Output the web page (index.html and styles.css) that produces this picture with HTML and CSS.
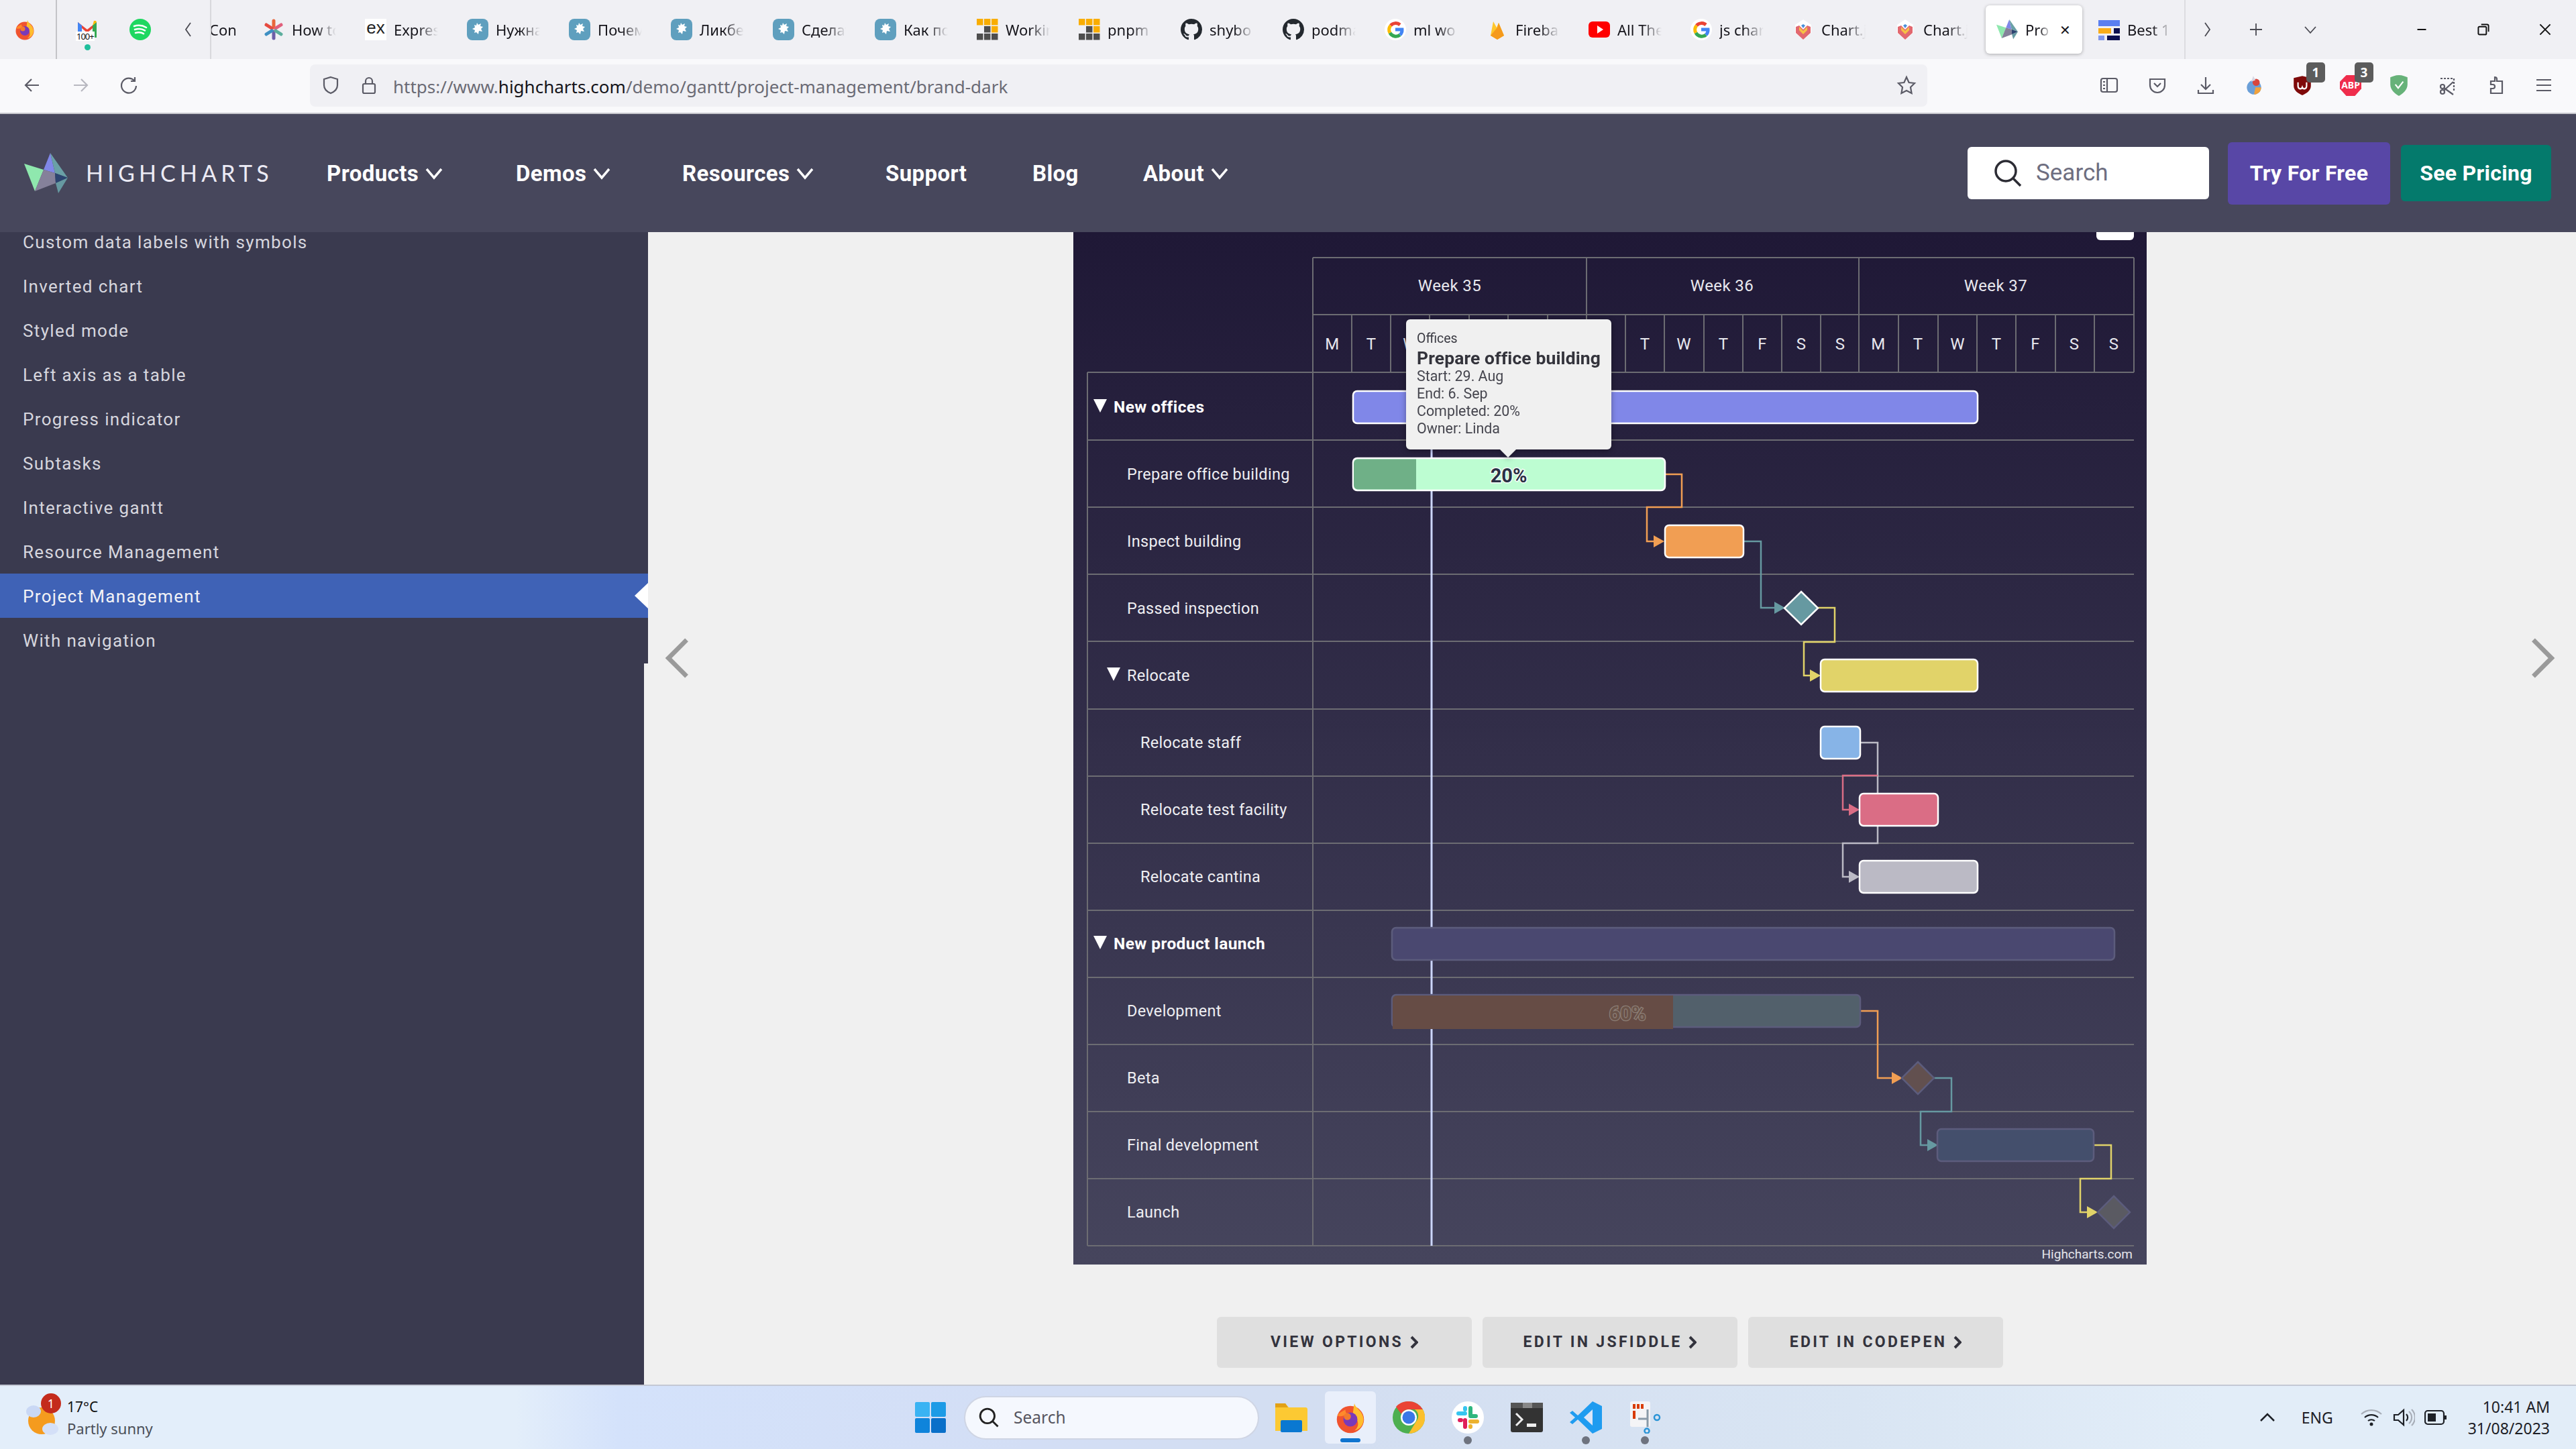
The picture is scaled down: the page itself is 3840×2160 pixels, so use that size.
FILE: index.html
```html
<!DOCTYPE html>
<html lang="en">
<head>
<meta charset="utf-8">
<title>Project Management | Highcharts</title>
<link rel="stylesheet" href="styles.css">
</head>
<body>
<svg class="defs" aria-hidden="true">
  <defs>
    <linearGradient id="chartBg" x1="0" y1="0" x2="0" y2="1"><stop offset="0" stop-color="#1f1836"/><stop offset="1" stop-color="#46455d"/></linearGradient>
    <symbol id="i-firefox" viewBox="0 0 32 32"><circle cx="16" cy="18" r="13.5" fill="#f0532f"/><path d="M20 2c1 5 9 8 9 16 0 6-4 10-9 11 6-4 4-12-2-15 1-4 1-8 2-12z" fill="#ffbd2e"/><path d="M3 14c3-4 6-4 8-6 0 3 1 4 3 5-5 1-8 3-11 1z" fill="#ff8a2b"/><circle cx="16" cy="18" r="7" fill="#7a3ab8"/><circle cx="13" cy="15" r="3.5" fill="#f37a2c"/></symbol>
    <symbol id="i-chat" viewBox="0 0 32 32"><rect width="32" height="32" rx="8" fill="#5f9fbe"/><path d="M15 6l2 3 4-2-1 4 4 1-3 3 2 4-5-1-1 5-3-3-3 1 1-4-4-2 4-2-1-4 3 1z" fill="#fff"/></symbol>
    <symbol id="i-pnpm" viewBox="0 0 32 32"><g fill="#f9ad00"><rect width="9.5" height="9.5"/><rect x="11" width="9.5" height="9.5"/><rect x="22" width="9.5" height="9.5"/><rect x="22" y="11" width="9.5" height="9.5"/></g><g fill="#4e4e4e"><rect x="11" y="11" width="9.5" height="9.5"/><rect y="22" width="9.5" height="9.5"/><rect x="11" y="22" width="9.5" height="9.5"/><rect x="22" y="22" width="9.5" height="9.5"/></g></symbol>
    <symbol id="i-gh" viewBox="0 0 16 16"><path fill="#24292f" d="M8 0C3.58 0 0 3.58 0 8c0 3.54 2.29 6.53 5.47 7.59.4.07.55-.17.55-.38 0-.19-.01-.82-.01-1.49-2.01.37-2.53-.49-2.69-.94-.09-.23-.48-.94-.82-1.13-.28-.15-.68-.52-.01-.53.63-.01 1.08.58 1.23.82.72 1.21 1.87.87 2.33.66.07-.52.28-.87.51-1.07-1.78-.2-3.64-.89-3.64-3.95 0-.87.31-1.59.82-2.15-.08-.2-.36-1.02.08-2.12 0 0 .67-.21 2.2.82.64-.18 1.32-.27 2-.27.68 0 1.36.09 2 .27 1.53-1.04 2.2-.82 2.2-.82.44 1.1.16 1.92.08 2.12.51.56.82 1.27.82 2.15 0 3.07-1.87 3.75-3.65 3.95.29.25.54.73.54 1.48 0 1.07-.01 1.93-.01 2.2 0 .21.15.46.55.38A8.013 8.013 0 0016 8c0-4.42-3.58-8-8-8z"/></symbol>
    <symbol id="i-g" viewBox="0 0 32 32"><circle cx="16" cy="16" r="16" fill="#fff"/><g fill="none" stroke-width="5"><path d="M23 9a10 10 0 0 0-14 1" stroke="#ea4335"/><path d="M9 10a10 10 0 0 0-1 11" stroke="#fbbc05"/><path d="M8 21a10 10 0 0 0 15 3" stroke="#34a853"/><path d="M23 24a10 10 0 0 0 3-8H16" stroke="#4285f4"/></g></symbol>
    <symbol id="i-chartjs" viewBox="0 0 32 32"><path d="M16 1l12 8v12L16 31 4 21V9z" fill="#fff"/><path d="M5 12l5-2 6 6 6-6 5 2v9L16 31 5 21z" fill="#e2686f"/><path d="M10 12l6 6 6-6v5l-6 6-6-6z" fill="#f6c244"/><path d="M13 10l3 4 3-4-3-2z" fill="#4a90d9"/></symbol>
    <symbol id="i-hc" viewBox="0 0 65 61"><polygon points="0,16 29,25 16,57" fill="#8fe8ae"/><polygon points="39,0 29,25 46,30" fill="#8087e8"/><polygon points="39,0 65,37 46,30" fill="#6aa0a6"/><polygon points="29,25 46,30 47,45 16,57" fill="#85819a"/><polygon points="46,30 65,37 47,45" fill="#2c4470"/><polygon points="47,45 65,37 51,60" fill="#6699a1"/></symbol>
  </defs>
</svg>

<div class="page">
  <div class="tabstrip">
    <div class="pinned">
      <span class="pin pin-first"><svg class="fav"><use href="#i-firefox"/></svg></span>
      <span class="pin pin-gmail">
        <svg class="fav" viewBox="0 0 32 32"><path d="M2 28V5l14 11L30 5v23h-6V14l-8 7-8-7v14z" fill="#ea4335"/><path d="M2 28V5l6 5v18z" fill="#4285f4"/><path d="M30 28V5l-6 5v18z" fill="#34a853"/><path d="M24 10l6-5-1-2-3 0z" fill="#fbbc05"/></svg>
        <span class="gmail-count">100+</span>
        <span class="gmail-dot"></span>
      </span>
      <span class="pin pin-spotify"><svg class="fav" viewBox="0 0 32 32"><circle cx="16" cy="16" r="16" fill="#1ed760"/><g fill="none" stroke="#fff" stroke-width="2.6" stroke-linecap="round"><path d="M7 11c6-2 13-1 18 2"/><path d="M8 16c5-1.600 11-1 15 1.500"/><path d="M9 21c4-1 9-.7 12 1.200"/></g></svg></span>
      <span class="pin pin-scroll"><svg class="glyph" viewBox="0 0 24 24"><path d="M15 2L8 12l7 10"/></svg></span>
    </div>
    <div class="tab tab-cut"><span class="tab-text">Con</span></div>
    <div class="tab"><svg class="fav" viewBox="0 0 32 32"><g stroke-width="5" stroke-linecap="round"><path d="M16 3v10" stroke="#e8663c"/><path d="M16 19v10" stroke="#6d5ea8"/><path d="M5 9l8 5" stroke="#e64a3f"/><path d="M27 9l-8 5" stroke="#e0607c"/><path d="M5 23l8-5" stroke="#3e8fc2"/><path d="M27 23l-8-5" stroke="#5cae9d"/></g></svg><span class="tab-text">How to</span></div>
    <div class="tab"><span class="fav fav-ex">ex</span><span class="tab-text">Express</span></div>
    <div class="tab"><svg class="fav"><use href="#i-chat"/></svg><span class="tab-text">Нужна</span></div>
    <div class="tab"><svg class="fav"><use href="#i-chat"/></svg><span class="tab-text">Почему</span></div>
    <div class="tab"><svg class="fav"><use href="#i-chat"/></svg><span class="tab-text">Ликбез</span></div>
    <div class="tab"><svg class="fav"><use href="#i-chat"/></svg><span class="tab-text">Сделать</span></div>
    <div class="tab"><svg class="fav"><use href="#i-chat"/></svg><span class="tab-text">Как по</span></div>
    <div class="tab"><svg class="fav"><use href="#i-pnpm"/></svg><span class="tab-text">Working</span></div>
    <div class="tab"><svg class="fav"><use href="#i-pnpm"/></svg><span class="tab-text">pnpm</span></div>
    <div class="tab"><svg class="fav"><use href="#i-gh"/></svg><span class="tab-text">shybo</span></div>
    <div class="tab"><svg class="fav"><use href="#i-gh"/></svg><span class="tab-text">podman</span></div>
    <div class="tab"><svg class="fav"><use href="#i-g"/></svg><span class="tab-text">ml wo</span></div>
    <div class="tab"><svg class="fav" viewBox="0 0 32 32"><path d="M6 25L10 4l5 9 3-7 8 19-10 6z" fill="#ffc62b"/><path d="M6 25l10-12 2-7 8 19-10 6z" fill="#f59a1c"/></svg><span class="tab-text">Firebase</span></div>
    <div class="tab"><svg class="fav" viewBox="0 0 32 32"><rect y="4" width="32" height="24" rx="6" fill="#f00"/><path d="M13 10l9 6-9 6z" fill="#fff"/></svg><span class="tab-text">All The</span></div>
    <div class="tab"><svg class="fav"><use href="#i-g"/></svg><span class="tab-text">js chart</span></div>
    <div class="tab"><svg class="fav"><use href="#i-chartjs"/></svg><span class="tab-text">Chart.js</span></div>
    <div class="tab"><svg class="fav"><use href="#i-chartjs"/></svg><span class="tab-text">Chart.js</span></div>
    <div class="tab tab-active"><svg class="fav"><use href="#i-hc"/></svg><span class="tab-text tab-text-short">Pro</span><span class="tab-close">✕</span></div>
    <div class="tab tab-last"><svg class="fav" viewBox="0 0 32 32"><rect x="0" y="2" width="32" height="9" fill="#5b7ff0"/><rect x="0" y="14" width="19" height="8" fill="#f9ad1a"/><rect x="23" y="14" width="9" height="8" fill="#0d1150"/><rect x="0" y="25" width="9" height="7" fill="#7f97ec"/><rect x="13" y="25" width="19" height="7" fill="#0d1150"/></svg><span class="tab-text">Best 1</span></div>
    <span class="strip-btn strip-next"><svg class="glyph" viewBox="0 0 24 24"><path d="M9 2l7 10-7 10"/></svg></span>
    <span class="strip-btn strip-plus"><svg class="glyph" viewBox="0 0 24 24"><path d="M12 3v18M3 12h18"/></svg></span>
    <span class="strip-btn strip-list"><svg class="glyph" viewBox="0 0 24 24"><path d="M4 8l8 9 8-9"/></svg></span>
    <span class="win-controls">
      <span class="win-btn"><svg class="glyph" viewBox="0 0 24 24"><path d="M6 12h12"/></svg></span>
      <span class="win-btn"><svg class="glyph" viewBox="0 0 24 24"><rect x="5" y="8" width="11" height="11" rx="1.500"/><path d="M9 5h8a2 2 0 0 1 2 2v8"/></svg></span>
      <span class="win-btn"><svg class="glyph" viewBox="0 0 24 24"><path d="M5 5l14 14M19 5L5 19"/></svg></span>
    </span>
  </div>

  <div class="toolbar">
    <span class="tool"><svg class="tool-icon" viewBox="0 0 30 30"><path d="M25 15H6M14 6l-9 9 9 9"/></svg></span>
    <span class="tool tool-off"><svg class="tool-icon" viewBox="0 0 30 30"><path d="M5 15h19M16 6l9 9-9 9"/></svg></span>
    <span class="tool"><svg class="tool-icon" viewBox="0 0 30 30"><path d="M23 8a11 11 0 1 0 3 8M24 3v6h-6"/></svg></span>
    <div class="urlbar">
      <svg class="tool-icon url-shield" viewBox="0 0 30 30"><path d="M15 3l10 3v9c0 6-5 10-10 12-5-2-10-6-10-12V6z"/></svg>
      <svg class="tool-icon url-lock" viewBox="0 0 30 30"><rect x="6" y="13" width="18" height="14" rx="2"/><path d="M10 13V9a5 5 0 0 1 10 0v4"/></svg>
      <span class="url-text">https://www.<b>highcharts.com</b>/demo/gantt/project-management/brand-dark</span>
      <svg class="tool-icon url-star" viewBox="0 0 30 30"><path d="M15 3l3.600 8 8.400 1-6 6 1.600 9L15 23l-7.600 4L9 18l-6-6 8.400-1z"/></svg>
    </div>
    <div class="ext-row">
      <span class="tool"><svg class="tool-icon" viewBox="0 0 30 30"><rect x="3" y="5" width="24" height="20" rx="3"/><path d="M12 5v20M6 10h3M6 15h3M6 20h3"/></svg></span>
      <span class="tool"><svg class="tool-icon" viewBox="0 0 30 30"><path d="M4 6h22v9a11 11 0 0 1-22 0z"/><path d="M10 12l5 5 5-5"/></svg></span>
      <span class="tool"><svg class="tool-icon" viewBox="0 0 30 30"><path d="M15 3v18M8 14l7 7 7-7M4 22v5h22v-5"/></svg></span>
      <span class="tool"><svg class="ext" viewBox="0 0 30 30"><circle cx="15" cy="18" r="10" fill="#6a9fd8"/><path d="M15 28a10 10 0 0 0 10-10h-8z" fill="#f2a23c"/><circle cx="18" cy="11" r="5" fill="#d8463c"/><path d="M14 2l3 6-6 2z" fill="#d7d7e4"/></svg></span>
      <span class="tool"><svg class="ext" viewBox="0 0 30 30"><path d="M15 2l12 3v11c0 7-7 11-12 13C10 27 3 23 3 16V5z" fill="#7f0a0a"/><path d="M9 11v5c0 5 5 5 6 2 1 3 6 3 6-2v-5" fill="none" stroke="#fff" stroke-width="2"/></svg><span class="ext-badge">1</span></span>
      <span class="tool"><svg class="ext" viewBox="0 0 30 30"><polygon points="9,1 21,1 30,10 30,20 21,30 9,30 0,20 0,10" fill="#ef2d4c"/></svg><span class="ext-abp">ABP</span><span class="ext-badge">3</span></span>
      <span class="tool"><svg class="ext" viewBox="0 0 30 30"><path d="M15 1c5 0 9 2 12 3v10c0 8-7 13-12 16C10 27 3 22 3 14V4c3-1 7-3 12-3z" fill="#67b279"/><path d="M10 14l4 5 7-9" fill="none" stroke="#fff" stroke-width="2"/></svg></span>
      <span class="tool"><svg class="tool-icon" viewBox="0 0 30 30"><path d="M5 5h20v18" stroke-dasharray="3 2"/><circle cx="8" cy="25" r="3"/><circle cx="8" cy="17" r="3"/><path d="M10 23L24 10M10 19l14 10"/></svg></span>
      <span class="tool"><svg class="tool-icon" viewBox="0 0 30 30"><path d="M14 3a3 3 0 0 1 3 3v3h8v18H8v-7h3a3 3 0 0 0 0-6H8V9h6z"/></svg></span>
      <span class="tool"><svg class="tool-icon" viewBox="0 0 30 30"><path d="M4 7h22M4 15h22M4 23h22"/></svg></span>
    </div>
  </div>

  <header class="sitenav">
    <a class="logo">
      <svg class="logo-mark"><use href="#i-hc"/></svg>
      <span class="logo-word">HIGHCHARTS</span>
    </a>
    <nav class="menu">
      <a class="menu-item menu-products">Products<svg class="chev" viewBox="0 0 28 20"><path d="M3 3l11 13L25 3"/></svg></a>
      <a class="menu-item menu-demos">Demos<svg class="chev" viewBox="0 0 28 20"><path d="M3 3l11 13L25 3"/></svg></a>
      <a class="menu-item menu-resources">Resources<svg class="chev" viewBox="0 0 28 20"><path d="M3 3l11 13L25 3"/></svg></a>
      <a class="menu-item menu-support">Support</a>
      <a class="menu-item menu-blog">Blog</a>
      <a class="menu-item menu-about">About<svg class="chev" viewBox="0 0 28 20"><path d="M3 3l11 13L25 3"/></svg></a>
    </nav>
    <div class="nav-right">
      <div class="searchbox">
        <svg class="search-icon" viewBox="0 0 42 42"><circle cx="18" cy="18" r="15"/><path d="M29 29l11 11"/></svg>
        <span class="search-text">Search</span>
      </div>
      <a class="cta cta-try">Try For Free</a>
      <a class="cta cta-price">See Pricing</a>
    </div>
  </header>

  <main class="main">
    <aside class="sidebar">
      <ul class="sb-list">
        <li class="sb-item sb-first">Custom data labels with symbols</li>
        <li class="sb-item">Inverted chart</li>
        <li class="sb-item">Styled mode</li>
        <li class="sb-item">Left axis as a table</li>
        <li class="sb-item">Progress indicator</li>
        <li class="sb-item">Subtasks</li>
        <li class="sb-item">Interactive gantt</li>
        <li class="sb-item">Resource Management</li>
        <li class="sb-item sb-active">Project Management</li>
        <li class="sb-item">With navigation</li>
      </ul>
      <div class="sb-rest"></div>
    </aside>

    <section class="stage">
      <svg class="chart" viewBox="1600 346 1600 1539" role="img" aria-label="Gantt chart">
        <rect x="1600" y="346" width="1600" height="1539" fill="url(#chartBg)"/>
        <path class="menu-btn" d="M3125 346h56v6a6 6 0 0 1-6 6h-44a6 6 0 0 1-6-6z"/>

        <g class="grid">
          <path d="M1957 384H3181M1957 469H3181M1621 555H3181M1621 656H3181M1621 756H3181M1621 856H3181M1621 956H3181M1621 1057H3181M1621 1157H3181M1621 1257H3181M1621 1357H3181M1621 1457H3181M1621 1557H3181M1621 1657H3181M1621 1757H3181M1621 1857H3181"/>
          <path d="M1621 555V1857M1957 384V1857M3181 384V555M2365 384V469M2771 384V469"/>
          <path d="M2015 469V555M2073 469V555M2131 469V555M2190 469V555M2248 469V555M2307 469V555M2365 469V555M2423 469V555M2481 469V555M2540 469V555M2598 469V555M2656 469V555M2714 469V555M2771 469V555M2830 469V555M2889 469V555M2947 469V555M3005 469V555M3064 469V555M3122 469V555"/>
        </g>

        <g class="axis-top">
          <text x="2161" y="434">Week 35</text><text x="2567" y="434">Week 36</text><text x="2975" y="434">Week 37</text>
          <text x="1986" y="521">M</text><text x="2044" y="521">T</text><text x="2102" y="521">W</text>
          <text x="2452" y="521">T</text><text x="2510" y="521">W</text><text x="2569" y="521">T</text><text x="2627" y="521">F</text><text x="2685" y="521">S</text><text x="2743" y="521">S</text>
          <text x="2800" y="521">M</text><text x="2859" y="521">T</text><text x="2918" y="521">W</text><text x="2976" y="521">T</text><text x="3034" y="521">F</text><text x="3092" y="521">S</text><text x="3151" y="521">S</text>
        </g>

        <g class="axis-left">
          <path class="tree" d="M1630 595h20l-10 20z"/><text class="group" x="1660" y="615">New offices</text>
          <text x="1680" y="715">Prepare office building</text>
          <text x="1680" y="815">Inspect building</text>
          <text x="1680" y="915">Passed inspection</text>
          <path class="tree" d="M1650 995h20l-10 20z"/><text x="1680" y="1015">Relocate</text>
          <text x="1700" y="1115">Relocate staff</text>
          <text x="1700" y="1215">Relocate test facility</text>
          <text x="1700" y="1315">Relocate cantina</text>
          <path class="tree" d="M1630 1395h20l-10 20z"/><text class="group" x="1660" y="1415">New product launch</text>
          <text x="1680" y="1515">Development</text>
          <text x="1680" y="1615">Beta</text>
          <text x="1680" y="1715">Final development</text>
          <text x="1680" y="1815">Launch</text>
        </g>

        <path class="today" d="M2134 556V1857"/>

        <g class="links">
          <path stroke="#f19e53" d="M2482 707H2507V756H2455V807H2468"/><path fill="#f19e53" d="M2465 798l16 9-16 9z"/>
          <path stroke="#6699a1" d="M2599 807H2625V906H2648"/><path fill="#6699a1" d="M2645 897l16 9-16 9z"/>
          <path stroke="#e1d369" d="M2710 906H2735V957H2689V1007H2702"/><path fill="#e1d369" d="M2698 998l16 9-16 9z"/>
          <path stroke="#bbbac5" d="M2773 1107H2799V1257H2747V1307H2760"/><path fill="#bbbac5" d="M2756 1298l16 9-16 9z"/>
          <path stroke="#da6d85" d="M2799 1156H2747V1207H2760"/><path fill="#da6d85" d="M2756 1198l16 9-16 9z"/>
          <path stroke="#f19e53" d="M2773 1507H2799V1607H2823"/><path fill="#f19e53" d="M2820 1598l16 9-16 9z"/>
          <path stroke="#6699a1" d="M2883 1607H2909V1657H2863V1707H2876"/><path fill="#6699a1" d="M2873 1698l16 9-16 9z"/>
          <path stroke="#e1d369" d="M3121 1707H3147V1757H3101V1807H3114"/><path fill="#e1d369" d="M3111 1798l16 9-16 9z"/>
        </g>

        <g class="bars">
          <rect x="2017" y="583" width="931" height="48" rx="6" fill="#8087e8"/>
          <rect x="2017" y="683" width="465" height="48" rx="6" fill="#bdfdd2"/>
          <path class="bar-progress" d="M2111 684.500H2024a6 6 0 0 0-6 6v33a6 6 0 0 0 6 6h87z"/>
          <rect x="2482" y="783" width="117" height="48" rx="6" fill="#f19e53"/>
          <path d="M2685 882l25 24.500-25 24.500-25-24.500z" fill="#6699a1"/>
          <rect x="2714" y="983" width="234" height="48" rx="6" fill="#e1d369"/>
          <rect x="2714" y="1083" width="59" height="48" rx="6" fill="#87b4e7"/>
          <rect x="2772" y="1183" width="117" height="48" rx="6" fill="#da6d85"/>
          <rect x="2772" y="1283" width="176" height="48" rx="6" fill="#bbbac5"/>
        </g>
        <g class="bars-dim">
          <rect x="2075" y="1383" width="1077" height="48" rx="6" fill="#4a4870"/>
          <rect x="2075" y="1483" width="698" height="48" rx="6" fill="#52606b"/>
          <path d="M2494 1484H2082a6 6 0 0 0-6 6v44a0 0 0 0 0 0 0h418z" class="dev-progress"/>
          <path d="M2859 1583l24 24-24 24-24-24z" fill="#62504f"/>
          <rect x="2888" y="1683" width="233" height="48" rx="6" fill="#444f6c"/>
          <path d="M3151 1783l24 24-24 24-24-24z" fill="#5a5a62" stroke="#5a5a62"/>
        </g>
        <text class="bar-label" x="2249" y="719">20%</text>
        <text class="bar-label-dim" x="2426" y="1521">60%</text>

        <g class="tooltip">
          <path class="tip-box" d="M2102 476h294a6 6 0 0 1 6 6v182a6 6 0 0 1-6 6h-136l-12 12-12-12H2102a6 6 0 0 1-6-6V482a6 6 0 0 1 6-6z"/>
          <text class="tip-small" x="2112" y="511">Offices</text>
          <text class="tip-title" x="2112" y="543">Prepare office building</text>
          <text class="tip-line" x="2112" y="568">Start: 29. Aug</text>
          <text class="tip-line" x="2112" y="594">End: 6. Sep</text>
          <text class="tip-line" x="2112" y="620">Completed: 20%</text>
          <text class="tip-line" x="2112" y="646">Owner: Linda</text>
        </g>

        <text class="credits" x="3179" y="1876">Highcharts.com</text>
      </svg>

      <div class="actions">
        <a class="action">VIEW OPTIONS<svg class="action-chev" viewBox="0 0 12 20"><path d="M2 2l8 8-8 8"/></svg></a>
        <a class="action">EDIT IN JSFIDDLE<svg class="action-chev" viewBox="0 0 12 20"><path d="M2 2l8 8-8 8"/></svg></a>
        <a class="action">EDIT IN CODEPEN<svg class="action-chev" viewBox="0 0 12 20"><path d="M2 2l8 8-8 8"/></svg></a>
      </div>

      <svg class="pager pager-prev" viewBox="0 0 40 64"><path d="M34 4L6 32l28 28"/></svg>
      <svg class="pager pager-next" viewBox="0 0 40 64"><path d="M6 4l28 28L6 60"/></svg>
    </section>
  </main>

  <footer class="taskbar">
    <div class="weather">
      <svg class="weather-icon" viewBox="0 0 50 54"><circle cx="24" cy="32" r="20" fill="#f59b1e"/><ellipse cx="12" cy="18" rx="11" ry="9" fill="#c9d8f5"/><ellipse cx="37" cy="44" rx="12" ry="9" fill="#d4e0f8"/></svg>
      <span class="weather-badge">1</span>
      <div class="weather-text"><span class="weather-temp">17°C</span><span class="weather-desc">Partly sunny</span></div>
    </div>
    <div class="task-center">
      <svg class="start" viewBox="0 0 46 46"><rect width="22" height="22" rx="2" fill="#3ab3f3"/><rect x="24" width="22" height="22" rx="2" fill="#1d9be6"/><rect y="24" width="22" height="22" rx="2" fill="#0f84db"/><rect x="24" y="24" width="22" height="22" rx="2" fill="#0a6fc9"/></svg>
      <div class="task-search">
        <svg class="task-search-icon" viewBox="0 0 42 42"><circle cx="18" cy="18" r="15"/><path d="M29 29l11 11"/></svg>
        <span class="task-search-text">Search</span>
      </div>
      <span class="task-app task-explorer"><svg class="app-icon" viewBox="0 0 48 44"><path d="M0 4a3 3 0 0 1 3-3h12l5 6h25a3 3 0 0 1 3 3v32H0z" fill="#fcc933"/><path d="M0 1h15l4 6H0z" fill="#e2a117"/><rect x="8" y="26" width="32" height="18" rx="2" fill="#0a78d1"/></svg></span>
      <span class="task-app task-active"><svg class="app-icon"><use href="#i-firefox"/></svg><i class="run-bar"></i></span>
      <span class="task-app"><svg class="app-icon" viewBox="0 0 48 48"><circle cx="24" cy="24" r="24" fill="#4caf50"/><path d="M24 0a24 24 0 0 1 21 12H24a12 12 0 0 0-11 7L5 8A24 24 0 0 1 24 0z" fill="#ea4335"/><path d="M45 12a24 24 0 0 1-21 36l11-18a12 12 0 0 0-2-18z" fill="#fbc02d"/><circle cx="24" cy="24" r="12" fill="#fff"/><circle cx="24" cy="24" r="9.500" fill="#3b78e7"/></svg></span>
      <span class="task-app"><svg class="app-icon" viewBox="0 0 48 48"><circle cx="24" cy="24" r="24" fill="#fff"/><g stroke-width="6" stroke-linecap="round"><path d="M28 10v10M36 22h-8" stroke="#2eb67d"/><path d="M20 18H10M20 10v2" stroke="#36c5f0"/><path d="M20 28v10M12 28h2" stroke="#e01e5a"/><path d="M28 30h10M28 38v-1" stroke="#ecb22e"/></g></svg><i class="run-dot"></i></span>
      <span class="task-app"><svg class="app-icon" viewBox="0 0 48 44"><rect width="48" height="44" rx="3" fill="#333"/><rect width="48" height="8" fill="#555"/><rect x="18" width="14" height="8" fill="#888"/><path d="M8 16l9 9-9 9" fill="none" stroke="#eee" stroke-width="3"/><rect x="24" y="31" width="14" height="5" fill="#eee"/></svg></span>
      <span class="task-app"><svg class="app-icon" viewBox="0 0 48 48"><path d="M34 0l14 7v34l-14 7L12 27l-8 7-4-3 8-7-8-7 4-3 8 7z" fill="#1f9cf0"/><path d="M34 12L21 24l13 12z" fill="#dbe6f8"/></svg><i class="run-dot"></i></span>
      <span class="task-app"><svg class="app-icon" viewBox="0 0 48 48"><rect x="2" y="0" width="30" height="38" rx="3" fill="#f4f4f6"/><rect x="6" y="4" width="4" height="7" fill="#d83b01"/><rect x="12" y="4" width="4" height="7" fill="#d83b01"/><rect x="18" y="4" width="4" height="7" fill="#d83b01"/><rect x="6" y="14" width="4" height="12" fill="#d83b01"/><path d="M28 12v14H14M28 26v12" fill="none" stroke="#8a9aa8" stroke-width="3"/><circle cx="42" cy="24" r="4" fill="none" stroke="#2a94d6" stroke-width="2.500"/><circle cx="27" cy="44" r="3.500" fill="none" stroke="#2a94d6" stroke-width="2.500"/></svg><i class="run-dot"></i></span>
    </div>
    <div class="tray">
      <svg class="tray-chev" viewBox="0 0 24 14"><path d="M2 12L12 2l10 10"/></svg>
      <span class="tray-lang">ENG</span>
      <svg class="tray-icon" viewBox="0 0 34 30"><path class="dim" d="M2 10a22 22 0 0 1 30 0"/><path d="M7 15a15 15 0 0 1 20 0M12 20a8 8 0 0 1 10 0"/><circle class="solid" cx="17" cy="25" r="2.500"/></svg>
      <svg class="tray-icon" viewBox="0 0 34 30"><path d="M3 11h6l8-7v22l-8-7H3z"/><path d="M21 10a7 7 0 0 1 0 10"/><path class="dim" d="M25 6a12 12 0 0 1 0 18M29 3a17 17 0 0 1 0 24"/></svg>
      <svg class="tray-icon tray-batt" viewBox="0 0 34 30"><rect x="1" y="5" width="28" height="20" rx="4"/><rect class="solid" x="5" y="9" width="12" height="12"/><path class="solid" d="M30 12h3v6h-3z"/></svg>
      <div class="clock"><span>10:41 AM</span><span>31/08/2023</span></div>
    </div>
  </footer>
</div>
</body>
</html>
```
FILE: styles.css
```css
* { box-sizing: border-box; }
html, body { margin: 0; padding: 0; }
body { width: 3840px; height: 2160px; overflow: hidden; font-family: "Noto Sans", sans-serif; background: #f0f0f0; color: #15141a; }
.defs { width: 0; height: 0; display: block; position: absolute; }
.page { display: flex; flex-direction: column; width: 3840px; height: 2160px; }

/* tab strip */
.tabstrip { display: flex; align-items: center; height: 88px; background: #f0f0f4; flex: none; }
.pinned { display: flex; align-items: center; width: 315px; height: 88px; border-right: 2px solid #d8d8dc; }
.pin { position: relative; display: flex; align-items: center; justify-content: center; height: 88px; flex: none; }
.pin-first { width: 85px; border-right: 2px solid #c4c4c8; padding-right: 10px; }
.pin-gmail { width: 90px; }
.pin-spotify { width: 68px; }
.pin-scroll { width: 70px; padding-left: 6px; }
.gmail-count { position: absolute; top: 47px; left: 28px; background: #fff; color: #111; font: 400 13px/14px "Noto Sans", sans-serif; padding: 0 1px; letter-spacing: -1px; }
.gmail-dot { position: absolute; left: 41px; top: 66px; width: 9px; height: 9px; border-radius: 50%; background: #1fbf9c; }
.fav { width: 32px; height: 32px; flex: none; display: block; }
.fav-ex { background: #fff; color: #222; font: 400 26px/26px "Liberation Sans", sans-serif; text-align: center; }
.glyph { width: 24px; height: 24px; fill: none; stroke: #4a4a52; stroke-width: 1.800; }
.tab { position: relative; display: flex; align-items: center; gap: 11px; width: 152px; height: 88px; padding-left: 12px; flex: none; }
.tab-cut { width: 65px; padding-left: 0; overflow: hidden; }
.tab-cut .tab-text { margin-left: -3px; }
.tab-text { display: block; width: 66px; overflow: hidden; white-space: nowrap; font-size: 22px; line-height: 30px; color: #15141a; -webkit-mask-image: linear-gradient(to right, #000 55%, transparent 100%); mask-image: linear-gradient(to right, #000 55%, transparent 100%); }
.tab-active::before { content: ""; position: absolute; left: -4px; top: 8px; width: 144px; height: 72px; background: #fff; border-radius: 6px; box-shadow: 0 1px 5px rgba(0,0,0,.3); }
.tab-active > * { position: relative; }
.tab-text-short { width: 38px; }
.tab-close { font-size: 20px; margin-left: 2px; color: #15141a; }
.tab-last { width: 142px; border-right: 2px solid #dcdce0; }
.strip-btn { display: flex; align-items: center; justify-content: center; height: 88px; flex: none; }
.strip-next { width: 64px; }
.strip-plus { width: 82px; }
.strip-list { width: 80px; }
.win-controls { display: flex; margin-left: auto; }
.win-btn { display: flex; align-items: center; justify-content: center; width: 92px; height: 88px; }
.win-btn .glyph { stroke: #111; width: 26px; height: 26px; }

/* toolbar */
.toolbar { display: flex; align-items: center; height: 82px; padding: 0 12px 2px; background: #f9f9fb; border-bottom: 2px solid #c6c6cc; flex: none; }
.tool { position: relative; display: flex; align-items: center; justify-content: center; width: 72px; height: 64px; flex: none; }
.tool-icon { width: 30px; height: 30px; fill: none; stroke: #5b5b66; stroke-width: 2.200; }
.tool-off .tool-icon { stroke: #b8b8c0; }
.urlbar { display: flex; align-items: center; width: 2411px; height: 63px; margin-left: 234px; background: #f0f0f4; border-radius: 8px; }
.url-shield { margin-left: 16px; }
.url-lock { margin-left: 27px; }
.url-text { margin-left: 21px; padding-top: 3px; font-size: 26px; line-height: 34px; color: #6b6b75; white-space: nowrap; }
.url-text b { font-weight: 400; color: #15141a; }
.url-star { margin-left: auto; margin-right: 16px; }
.ext-row { display: flex; margin-left: 235px; }
.ext { width: 32px; height: 36px; }
.ext-badge { position: absolute; top: -2px; left: 42px; width: 28px; height: 30px; border-radius: 5px; background: #5c5c5c; color: #fff; font: 700 19px/30px "Noto Sans", sans-serif; text-align: center; }
.ext-abp { position: absolute; left: 20px; top: 22px; width: 32px; text-align: center; color: #fff; font: 700 14px/20px "Noto Sans", sans-serif; }

/* site header */
.sitenav { display: flex; align-items: center; height: 176px; padding: 0 37px 0 36px; background: #47475c; flex: none; }
.logo { display: flex; align-items: center; width: 451px; flex: none; }
.logo-mark { width: 65px; height: 61px; flex: none; }
.logo-word { margin-left: 27px; font: 400 34px/40px Lato, sans-serif; letter-spacing: 6.200px; color: #ecebf5; white-space: nowrap; }
.menu { display: flex; align-items: center; }
.menu-item { display: flex; align-items: center; padding-top: 2px; font: 700 33px/40px Roboto, sans-serif; color: #fff; white-space: nowrap; letter-spacing: .4px; }
.menu-products { width: 282px; }
.menu-demos { width: 248px; }
.menu-resources { width: 303px; }
.menu-support { width: 219px; }
.menu-blog { width: 165px; }
.chev { width: 28px; height: 20px; margin-left: 9px; fill: none; stroke: #fff; stroke-width: 3.500; }
.nav-right { display: flex; align-items: center; margin-left: auto; }
.searchbox { display: flex; align-items: center; width: 360px; height: 78px; padding-left: 39px; background: #fff; border-radius: 6px; }
.search-icon { width: 42px; height: 42px; fill: none; stroke: #2c2c34; stroke-width: 3.500; flex: none; }
.search-text { margin-left: 21px; font: 400 35px/44px Roboto, sans-serif; color: #6e6e80; }
.cta { display: flex; align-items: center; justify-content: center; border-radius: 6px; color: #fff; font: 700 32px/40px Roboto, sans-serif; white-space: nowrap; letter-spacing: .3px; }
.cta-try { width: 242px; height: 93px; margin-left: 28px; background: #5847a6; }
.cta-price { width: 224px; height: 84px; margin-left: 16px; background: #047a6c; }

/* main */
.main { display: flex; flex: 1; min-height: 0; }
.sidebar { display: flex; flex-direction: column; width: 966px; flex: none; }
.sb-list { list-style: none; margin: 0; padding: 0; height: 643px; overflow: hidden; background: #3a3a4f; flex: none; }
.sb-item { position: relative; display: flex; align-items: center; height: 66px; padding: 2px 0 0 34px; font: 400 26px/32px Roboto, sans-serif; letter-spacing: 1.350px; color: #d6d6de; white-space: nowrap; }
.sb-first { margin-top: -19px; }
.sb-active { background: #3f62b6; color: #f2f2f6; }
.sb-active::after { content: ""; position: absolute; right: 0; top: 14px; border-style: solid; border-width: 19px 20px 19px 0; border-color: transparent #fff transparent transparent; }
.sb-rest { flex: 1; width: 960px; background: #3a3a4f; }
.stage { flex: 1; padding-left: 634px; }
.chart { display: block; width: 1600px; height: 1539px; }
.actions { display: flex; justify-content: center; gap: 16px; width: 1600px; margin-top: 78px; }
.action { display: flex; align-items: center; justify-content: center; width: 380px; height: 76px; background: #dfdfdf; border-radius: 6px; font: 700 23px/30px Roboto, sans-serif; letter-spacing: 3.300px; color: #33333d; white-space: nowrap; }
.action-chev { width: 12px; height: 20px; margin-left: 10px; fill: none; stroke: #33333d; stroke-width: 4; }
.pager { position: absolute; top: 950px; width: 40px; height: 62px; fill: none; stroke: #9a9a9a; stroke-width: 7; }
.pager-prev { left: 990px; }
.pager-next { left: 3770px; }

/* chart */
.menu-btn { fill: #fff; }
.grid path { fill: none; stroke: #6c6c72; stroke-width: 2; }
.axis-top text { font: 400 24px Roboto, sans-serif; letter-spacing: .4px; fill: #e8e8ee; text-anchor: middle; }
.axis-left text { font: 400 23.500px Roboto, sans-serif; letter-spacing: .3px; fill: #eeeef2; }
.axis-left .group { font-size: 24.500px; font-weight: 700; fill: #fff; letter-spacing: .4px; }
.tree { fill: #fff; }
.today { stroke: #ccd6ff; stroke-width: 3; fill: none; }
.links path[stroke] { fill: none; stroke-width: 2.500; }
.bars rect, .bars path { stroke: #fff; stroke-width: 2.500; }
.bars .bar-progress { fill: #6fb087; stroke: none; }
.bars-dim rect, .bars-dim path { stroke: #5c5c7c; stroke-width: 2.500; }
.bars-dim .dev-progress { fill: #664c45; stroke: none; }
.bar-label { font: 700 29px Roboto, sans-serif; fill: #2b3044; stroke: #f4fff8; stroke-width: 3px; paint-order: stroke; text-anchor: middle; }
.bar-label-dim { font: 700 29px Roboto, sans-serif; fill: #6a5349; stroke: #8e8078; stroke-width: 2.500px; paint-order: stroke; text-anchor: middle; }
.tooltip { filter: drop-shadow(0 2px 4px rgba(0,0,0,.35)); }
.tip-box { fill: #f0f0f0; }
.tip-small { font: 400 19.500px Roboto, sans-serif; fill: #3a3a42; }
.tip-title { font: 700 26.400px Roboto, sans-serif; fill: #33333b; letter-spacing: .15px; }
.tip-line { font: 400 21.400px Roboto, sans-serif; fill: #45454e; }
.credits { font: 400 19px Roboto, sans-serif; fill: #e4e4ea; text-anchor: end; }

/* taskbar */
.taskbar { position: relative; display: flex; align-items: center; height: 96px; flex: none; border-top: 2px solid #c4c8d4; background: linear-gradient(90deg, #e3eefa 0, #e3eefa 20%, #d4e2fb 24%, #d3def5 40%, #d3def1 52%, #d9e5f3 72%, #e2edf8 86%, #e2edf8 100%); }
.weather { position: relative; display: flex; align-items: center; width: 1364px; height: 94px; padding-left: 38px; flex: none; }
.weather-icon { width: 50px; height: 54px; flex: none; }
.weather-badge { position: absolute; left: 61px; top: 11px; width: 30px; height: 30px; border-radius: 50%; background: #c42b1c; color: #fff; font: 400 18px/30px "Noto Sans", sans-serif; text-align: center; }
.weather-text { display: flex; flex-direction: column; margin-left: 12px; gap: 5px; }
.weather-temp { font-size: 21px; line-height: 27px; color: #111; }
.weather-desc { font-size: 22px; line-height: 27px; color: #4b4f57; }
.task-center { display: flex; align-items: center; height: 94px; }
.start { width: 46px; height: 46px; flex: none; }
.task-search { display: flex; align-items: center; width: 436px; height: 61px; margin-left: 29px; padding-left: 20px; background: #f5f8fe; border-radius: 31px; box-shadow: 0 0 0 2px #cfd5e4; }
.task-search-icon { width: 30px; height: 30px; fill: none; stroke: #222; stroke-width: 4; flex: none; }
.task-search-text { margin-left: 22px; font-size: 24.500px; line-height: 32px; color: #55555f; }
.task-app { position: relative; display: flex; align-items: center; justify-content: center; width: 88px; height: 78px; flex: none; }
.task-explorer { width: 100px; }
.task-active { width: 76px; margin-right: 5px; background: #e9effb; border-radius: 6px; }
.app-icon { width: 48px; height: 48px; }
.run-bar { position: absolute; bottom: 2px; left: 23px; width: 30px; height: 6px; border-radius: 3px; background: #0f74d0; }
.run-dot { position: absolute; bottom: -1px; left: 38px; width: 12px; height: 12px; border-radius: 50%; background: #6e737f; }
.tray { display: flex; align-items: center; margin-left: auto; height: 94px; padding-right: 39px; }
.tray-chev { width: 24px; height: 14px; fill: none; stroke: #1d2026; stroke-width: 2.500; }
.tray-lang { margin-left: 39px; font-size: 23px; line-height: 30px; color: #1d2026; width: 73px; }
.tray-icon { width: 34px; height: 30px; margin-left: 14px; fill: none; stroke: #1d2026; stroke-width: 2.200; flex: none; }
.tray-icon .dim { stroke: #a8aeb8; }
.tray-icon .solid { fill: #1d2026; stroke: none; }
.clock { display: flex; flex-direction: column; align-items: flex-end; margin-left: 31px; font-size: 23px; line-height: 32px; color: #1d2026; }
```
